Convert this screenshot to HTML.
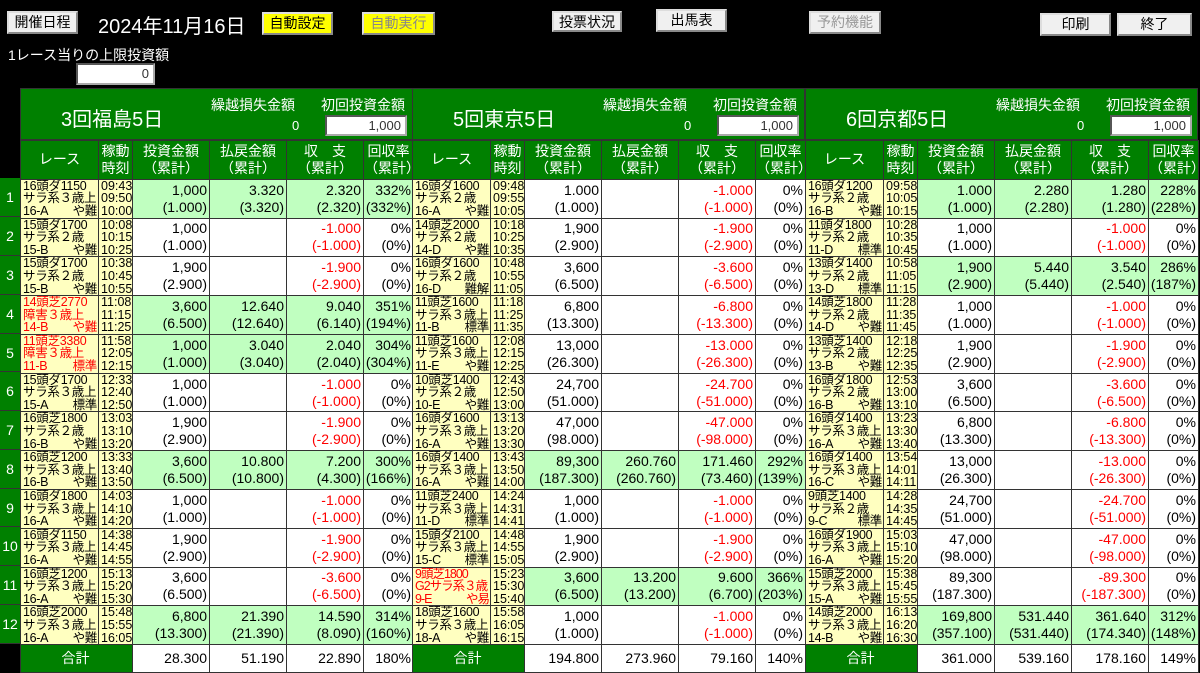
<!DOCTYPE html>
<html><head><meta charset="utf-8">
<style>
*{margin:0;padding:0;box-sizing:border-box}
body{width:1200px;height:673px;background:#000;position:relative;overflow:hidden;font-family:"Liberation Sans","Noto Sans CJK JP",sans-serif;color:#000}
.abs{position:absolute}
.btn{position:absolute;background:#f0f0f0;border:2px outset #ddd;font-size:14px;text-align:center;line-height:18px}
.yb{background:#ffff00}
.lbl{color:#fff}
.inp{position:absolute;background:#fff;border:2px inset #aaa;text-align:right;font-size:13px;padding-right:4px;line-height:17px;color:#333}
.sec{position:absolute;top:88px;width:393px}
.hd{height:52px;background:#008000;border:1px solid #333;position:relative;color:#fff}
.hd .tt{position:absolute;left:40px;top:14px;font-size:20px}
.hd .c1{position:absolute;left:190px;top:6px;font-size:14px}
.hd .c2{position:absolute;left:300px;top:6px;font-size:14px}
.hd .z{position:absolute;left:271px;top:29px;font-size:13px}
.hd .inp{left:304px;top:26px;width:82px;height:21px}
table{border-collapse:collapse;table-layout:fixed;width:393px}
td{border:1.5px solid #333;font-size:14px;line-height:17px;text-align:right;padding-right:2px;background:#fff;white-space:nowrap;overflow:hidden}
tr{height:38.75px}
tr.h td{background:#008000;color:#fff;text-align:center;font-size:14px;padding:0;height:38px}
td.r,td.t{background:#ffffc0;text-align:left;font-size:12.5px;line-height:12.6px;padding:0 0 0 2px}
td.r{white-space:normal;letter-spacing:-0.3px}
td.r b{float:right;font-weight:normal;padding-right:1px}
td.r.x{color:#f00}
tr.g td{background:#c0ffc0}
tr.g td.r,tr.g td.t{background:#ffffc0}
td.n{color:#f00}
tr.s{height:28px}
tr.s td{background:#fff}
tr.s td.gg{background:#008000;color:#fff;text-align:center}
.num{position:absolute;left:0;width:20px;background:#008000;color:#fff;font-size:14px;text-align:center;border-bottom:1.5px solid #333}
</style></head><body>
<div class="btn" style="left:7px;top:11px;width:71px;height:23px">開催日程</div>
<div class="abs lbl" style="left:98px;top:10px;font-size:20px">2024年11月16日</div>
<div class="btn yb" style="left:262px;top:12px;width:71px;height:23px">自動設定</div>
<div class="btn yb" style="left:362px;top:12px;width:73px;height:23px;color:#888">自動実行</div>
<div class="btn" style="left:552px;top:11px;width:70px;height:21px">投票状況</div>
<div class="btn" style="left:656px;top:9px;width:71px;height:23px">出馬表</div>
<div class="btn" style="left:809px;top:11px;width:72px;height:23px;color:#999">予約機能</div>
<div class="btn" style="left:1040px;top:13px;width:71px;height:23px">印刷</div>
<div class="btn" style="left:1117px;top:13px;width:75px;height:23px">終了</div>
<div class="abs lbl" style="left:8px;top:45px;font-size:14px">1レース当りの上限投資額</div>
<div class="inp" style="left:76px;top:63px;width:79px;height:22px">0</div>

<div class="num" style="top:178px;height:39px;line-height:39px">1</div>
<div class="num" style="top:217px;height:39px;line-height:39px">2</div>
<div class="num" style="top:256px;height:39px;line-height:39px">3</div>
<div class="num" style="top:295px;height:39px;line-height:39px">4</div>
<div class="num" style="top:334px;height:38px;line-height:38px">5</div>
<div class="num" style="top:372px;height:39px;line-height:39px">6</div>
<div class="num" style="top:411px;height:39px;line-height:39px">7</div>
<div class="num" style="top:450px;height:39px;line-height:39px">8</div>
<div class="num" style="top:489px;height:38px;line-height:38px">9</div>
<div class="num" style="top:527px;height:39px;line-height:39px">10</div>
<div class="num" style="top:566px;height:39px;line-height:39px">11</div>
<div class="num" style="top:605px;height:39px;line-height:39px">12</div>

<div class="sec" style="left:20px">
<div class="hd"><span class="tt">3回福島5日</span><span class="c1">繰越損失金額</span><span class="c2">初回投資金額</span><span class="z">0</span><div class="inp">1,000</div></div>
<table><colgroup><col style="width:78px"><col style="width:34px"><col style="width:77px"><col style="width:77px"><col style="width:77px"><col style="width:50px"></colgroup>
<tr class="h"><td>レース</td><td>稼動<br>時刻</td><td>投資金額<br>（累計）</td><td>払戻金額<br>（累計）</td><td>収　支<br>（累計）</td><td>回収率<br>（累計）</td></tr>
<tr class="g"><td class="r">16頭ダ1150<br>サラ系３歳上<br>16-A<b>や難</b></td><td class="t">09:43<br>09:50<br>10:00</td><td>1,000<br>(1.000)</td><td>3.320<br>(3.320)</td><td>2.320<br>(2.320)</td><td>332%<br>(332%)</td></tr>
<tr><td class="r">15頭ダ1700<br>サラ系２歳<br>15-B<b>や難</b></td><td class="t">10:08<br>10:15<br>10:25</td><td>1,000<br>(1.000)</td><td></td><td class="n">-1.000<br>(-1.000)</td><td>0%<br>(0%)</td></tr>
<tr><td class="r">15頭ダ1700<br>サラ系２歳<br>15-B<b>や難</b></td><td class="t">10:38<br>10:45<br>10:55</td><td>1,900<br>(2.900)</td><td></td><td class="n">-1.900<br>(-2.900)</td><td>0%<br>(0%)</td></tr>
<tr class="g"><td class="r x">14頭芝2770<br>障害３歳上<br>14-B<b>や難</b></td><td class="t">11:08<br>11:15<br>11:25</td><td>3,600<br>(6.500)</td><td>12.640<br>(12.640)</td><td>9.040<br>(6.140)</td><td>351%<br>(194%)</td></tr>
<tr class="g"><td class="r x">11頭芝3380<br>障害３歳上<br>11-B<b>標準</b></td><td class="t">11:58<br>12:05<br>12:15</td><td>1,000<br>(1.000)</td><td>3.040<br>(3.040)</td><td>2.040<br>(2.040)</td><td>304%<br>(304%)</td></tr>
<tr><td class="r">15頭ダ1700<br>サラ系３歳上<br>15-A<b>標準</b></td><td class="t">12:33<br>12:40<br>12:50</td><td>1,000<br>(1.000)</td><td></td><td class="n">-1.000<br>(-1.000)</td><td>0%<br>(0%)</td></tr>
<tr><td class="r">16頭芝1800<br>サラ系２歳<br>16-B<b>や難</b></td><td class="t">13:03<br>13:10<br>13:20</td><td>1,900<br>(2.900)</td><td></td><td class="n">-1.900<br>(-2.900)</td><td>0%<br>(0%)</td></tr>
<tr class="g"><td class="r">16頭芝1200<br>サラ系３歳上<br>16-B<b>や難</b></td><td class="t">13:33<br>13:40<br>13:50</td><td>3,600<br>(6.500)</td><td>10.800<br>(10.800)</td><td>7.200<br>(4.300)</td><td>300%<br>(166%)</td></tr>
<tr><td class="r">16頭ダ1800<br>サラ系３歳上<br>16-A<b>や難</b></td><td class="t">14:03<br>14:10<br>14:20</td><td>1,000<br>(1.000)</td><td></td><td class="n">-1.000<br>(-1.000)</td><td>0%<br>(0%)</td></tr>
<tr><td class="r">16頭ダ1150<br>サラ系３歳上<br>16-A<b>や難</b></td><td class="t">14:38<br>14:45<br>14:55</td><td>1,900<br>(2.900)</td><td></td><td class="n">-1.900<br>(-2.900)</td><td>0%<br>(0%)</td></tr>
<tr><td class="r">16頭芝1200<br>サラ系３歳上<br>16-A<b>や難</b></td><td class="t">15:13<br>15:20<br>15:30</td><td>3,600<br>(6.500)</td><td></td><td class="n">-3.600<br>(-6.500)</td><td>0%<br>(0%)</td></tr>
<tr class="g"><td class="r">16頭芝2000<br>サラ系３歳上<br>16-A<b>や難</b></td><td class="t">15:48<br>15:55<br>16:05</td><td>6,800<br>(13.300)</td><td>21.390<br>(21.390)</td><td>14.590<br>(8.090)</td><td>314%<br>(160%)</td></tr>
<tr class="s"><td class="gg" colspan="2">合計</td><td>28.300</td><td>51.190</td><td>22.890</td><td>180%</td></tr>
</table></div>

<div class="sec" style="left:412px">
<div class="hd"><span class="tt">5回東京5日</span><span class="c1">繰越損失金額</span><span class="c2">初回投資金額</span><span class="z">0</span><div class="inp">1,000</div></div>
<table><colgroup><col style="width:78px"><col style="width:34px"><col style="width:77px"><col style="width:77px"><col style="width:77px"><col style="width:50px"></colgroup>
<tr class="h"><td>レース</td><td>稼動<br>時刻</td><td>投資金額<br>（累計）</td><td>払戻金額<br>（累計）</td><td>収　支<br>（累計）</td><td>回収率<br>（累計）</td></tr>
<tr><td class="r">16頭ダ1600<br>サラ系２歳<br>16-A<b>や難</b></td><td class="t">09:48<br>09:55<br>10:05</td><td>1.000<br>(1.000)</td><td></td><td class="n">-1.000<br>(-1.000)</td><td>0%<br>(0%)</td></tr>
<tr><td class="r">14頭芝2000<br>サラ系２歳<br>14-D<b>や難</b></td><td class="t">10:18<br>10:25<br>10:35</td><td>1,900<br>(2.900)</td><td></td><td class="n">-1.900<br>(-2.900)</td><td>0%<br>(0%)</td></tr>
<tr><td class="r">16頭ダ1600<br>サラ系２歳<br>16-D<b>難解</b></td><td class="t">10:48<br>10:55<br>11:05</td><td>3,600<br>(6.500)</td><td></td><td class="n">-3.600<br>(-6.500)</td><td>0%<br>(0%)</td></tr>
<tr><td class="r">11頭芝1600<br>サラ系３歳上<br>11-B<b>標準</b></td><td class="t">11:18<br>11:25<br>11:35</td><td>6,800<br>(13.300)</td><td></td><td class="n">-6.800<br>(-13.300)</td><td>0%<br>(0%)</td></tr>
<tr><td class="r">11頭芝1600<br>サラ系３歳上<br>11-E<b>や難</b></td><td class="t">12:08<br>12:15<br>12:25</td><td>13,000<br>(26.300)</td><td></td><td class="n">-13.000<br>(-26.300)</td><td>0%<br>(0%)</td></tr>
<tr><td class="r">10頭芝1400<br>サラ系２歳<br>10-E<b>や難</b></td><td class="t">12:43<br>12:50<br>13:00</td><td>24,700<br>(51.000)</td><td></td><td class="n">-24.700<br>(-51.000)</td><td>0%<br>(0%)</td></tr>
<tr><td class="r">16頭ダ1600<br>サラ系３歳上<br>16-A<b>や難</b></td><td class="t">13:13<br>13:20<br>13:30</td><td>47,000<br>(98.000)</td><td></td><td class="n">-47.000<br>(-98.000)</td><td>0%<br>(0%)</td></tr>
<tr class="g"><td class="r">16頭ダ1400<br>サラ系３歳上<br>16-A<b>や難</b></td><td class="t">13:43<br>13:50<br>14:00</td><td>89,300<br>(187.300)</td><td>260.760<br>(260.760)</td><td>171.460<br>(73.460)</td><td>292%<br>(139%)</td></tr>
<tr><td class="r">11頭芝2400<br>サラ系３歳上<br>11-D<b>標準</b></td><td class="t">14:24<br>14:31<br>14:41</td><td>1,000<br>(1.000)</td><td></td><td class="n">-1.000<br>(-1.000)</td><td>0%<br>(0%)</td></tr>
<tr><td class="r">15頭ダ2100<br>サラ系３歳上<br>15-C<b>標準</b></td><td class="t">14:48<br>14:55<br>15:05</td><td>1,900<br>(2.900)</td><td></td><td class="n">-1.900<br>(-2.900)</td><td>0%<br>(0%)</td></tr>
<tr class="g"><td class="r x" style="letter-spacing:-1px">9頭芝1800<br>G2サラ系３歳<br>9-E<b>や易</b></td><td class="t">15:23<br>15:30<br>15:40</td><td>3,600<br>(6.500)</td><td>13.200<br>(13.200)</td><td>9.600<br>(6.700)</td><td>366%<br>(203%)</td></tr>
<tr><td class="r">18頭芝1600<br>サラ系３歳上<br>18-A<b>や難</b></td><td class="t">15:58<br>16:05<br>16:15</td><td>1,000<br>(1.000)</td><td></td><td class="n">-1.000<br>(-1.000)</td><td>0%<br>(0%)</td></tr>
<tr class="s"><td class="gg" colspan="2">合計</td><td>194.800</td><td>273.960</td><td>79.160</td><td>140%</td></tr>
</table></div>

<div class="sec" style="left:805px">
<div class="hd"><span class="tt">6回京都5日</span><span class="c1">繰越損失金額</span><span class="c2">初回投資金額</span><span class="z">0</span><div class="inp">1,000</div></div>
<table><colgroup><col style="width:78px"><col style="width:34px"><col style="width:77px"><col style="width:77px"><col style="width:77px"><col style="width:50px"></colgroup>
<tr class="h"><td>レース</td><td>稼動<br>時刻</td><td>投資金額<br>（累計）</td><td>払戻金額<br>（累計）</td><td>収　支<br>（累計）</td><td>回収率<br>（累計）</td></tr>
<tr class="g"><td class="r">16頭ダ1200<br>サラ系２歳<br>16-B<b>や難</b></td><td class="t">09:58<br>10:05<br>10:15</td><td>1.000<br>(1.000)</td><td>2.280<br>(2.280)</td><td>1.280<br>(1.280)</td><td>228%<br>(228%)</td></tr>
<tr><td class="r">11頭ダ1800<br>サラ系２歳<br>11-D<b>標準</b></td><td class="t">10:28<br>10:35<br>10:45</td><td>1,000<br>(1.000)</td><td></td><td class="n">-1.000<br>(-1.000)</td><td>0%<br>(0%)</td></tr>
<tr class="g"><td class="r">13頭ダ1400<br>サラ系２歳<br>13-D<b>標準</b></td><td class="t">10:58<br>11:05<br>11:15</td><td>1,900<br>(2.900)</td><td>5.440<br>(5.440)</td><td>3.540<br>(2.540)</td><td>286%<br>(187%)</td></tr>
<tr><td class="r">14頭芝1800<br>サラ系２歳<br>14-D<b>や難</b></td><td class="t">11:28<br>11:35<br>11:45</td><td>1,000<br>(1.000)</td><td></td><td class="n">-1.000<br>(-1.000)</td><td>0%<br>(0%)</td></tr>
<tr><td class="r">13頭芝1400<br>サラ系２歳<br>13-B<b>や難</b></td><td class="t">12:18<br>12:25<br>12:35</td><td>1,900<br>(2.900)</td><td></td><td class="n">-1.900<br>(-2.900)</td><td>0%<br>(0%)</td></tr>
<tr><td class="r">16頭ダ1800<br>サラ系２歳<br>16-B<b>や難</b></td><td class="t">12:53<br>13:00<br>13:10</td><td>3,600<br>(6.500)</td><td></td><td class="n">-3.600<br>(-6.500)</td><td>0%<br>(0%)</td></tr>
<tr><td class="r">16頭ダ1400<br>サラ系３歳上<br>16-A<b>や難</b></td><td class="t">13:23<br>13:30<br>13:40</td><td>6,800<br>(13.300)</td><td></td><td class="n">-6.800<br>(-13.300)</td><td>0%<br>(0%)</td></tr>
<tr><td class="r">16頭ダ1400<br>サラ系３歳上<br>16-C<b>や難</b></td><td class="t">13:54<br>14:01<br>14:11</td><td>13,000<br>(26.300)</td><td></td><td class="n">-13.000<br>(-26.300)</td><td>0%<br>(0%)</td></tr>
<tr><td class="r">9頭芝1400<br>サラ系２歳<br>9-C<b>標準</b></td><td class="t">14:28<br>14:35<br>14:45</td><td>24,700<br>(51.000)</td><td></td><td class="n">-24.700<br>(-51.000)</td><td>0%<br>(0%)</td></tr>
<tr><td class="r">16頭ダ1900<br>サラ系３歳上<br>16-A<b>や難</b></td><td class="t">15:03<br>15:10<br>15:20</td><td>47,000<br>(98.000)</td><td></td><td class="n">-47.000<br>(-98.000)</td><td>0%<br>(0%)</td></tr>
<tr><td class="r">15頭芝2000<br>サラ系３歳上<br>15-A<b>や難</b></td><td class="t">15:38<br>15:45<br>15:55</td><td>89,300<br>(187.300)</td><td></td><td class="n">-89.300<br>(-187.300)</td><td>0%<br>(0%)</td></tr>
<tr class="g"><td class="r">14頭芝2000<br>サラ系３歳上<br>14-B<b>や難</b></td><td class="t">16:13<br>16:20<br>16:30</td><td>169,800<br>(357.100)</td><td>531.440<br>(531.440)</td><td>361.640<br>(174.340)</td><td>312%<br>(148%)</td></tr>
<tr class="s"><td class="gg" colspan="2">合計</td><td>361.000</td><td>539.160</td><td>178.160</td><td>149%</td></tr>
</table></div>
</body></html>
